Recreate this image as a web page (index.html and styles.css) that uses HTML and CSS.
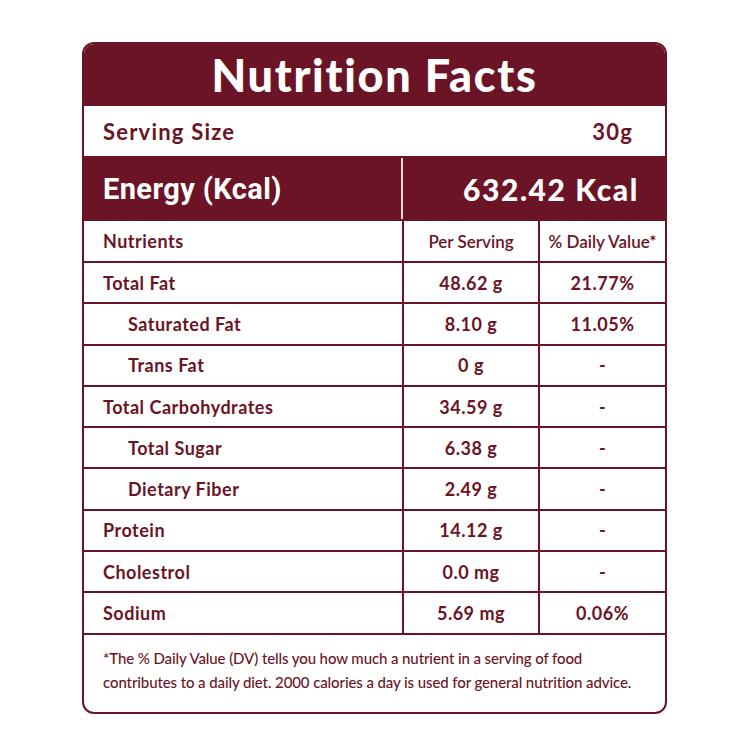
FILE: index.html
```html
<!DOCTYPE html>
<html>
<head>
<meta charset="utf-8">
<link rel="stylesheet" href="styles.css">
</head>
<body>
<div class="card">
  <div class="title">Nutrition Facts</div>
  <div class="serving"><span>Serving Size</span><span>30g</span></div>
  <div class="energy">
    <div class="energy-label">Energy (Kcal)</div>
    <div class="energy-value">632.42 Kcal</div>
  </div>
  <div class="table">
    <div class="row head"><div class="c1">Nutrients</div><div class="c2">Per Serving</div><div class="c3">% Daily Value*</div></div>
    <div class="row"><div class="c1">Total Fat</div><div class="c2">48.62 g</div><div class="c3">21.77%</div></div>
    <div class="row"><div class="c1 sub">Saturated Fat</div><div class="c2">8.10 g</div><div class="c3">11.05%</div></div>
    <div class="row"><div class="c1 sub">Trans Fat</div><div class="c2">0 g</div><div class="c3">-</div></div>
    <div class="row"><div class="c1">Total Carbohydrates</div><div class="c2">34.59 g</div><div class="c3">-</div></div>
    <div class="row"><div class="c1 sub">Total Sugar</div><div class="c2">6.38 g</div><div class="c3">-</div></div>
    <div class="row"><div class="c1 sub">Dietary Fiber</div><div class="c2">2.49 g</div><div class="c3">-</div></div>
    <div class="row"><div class="c1">Protein</div><div class="c2">14.12 g</div><div class="c3">-</div></div>
    <div class="row"><div class="c1">Cholestrol</div><div class="c2">0.0 mg</div><div class="c3">-</div></div>
    <div class="row"><div class="c1">Sodium</div><div class="c2">5.69 mg</div><div class="c3">0.06%</div></div>
  </div>
  <div class="footer">*The % Daily Value (DV) tells you how much a nutrient in a serving of food contributes to a daily diet. 2000 calories a day is used for general nutrition advice.</div>
</div>
</body>
</html>
```
FILE: styles.css
```css
html, body {
  margin: 0;
  padding: 0;
  background: #ffffff;
}
body {
  padding: 42px 0 0 82px;
  font-family: Lato, "Open Sans", sans-serif;
  color: #6b1425;
}
.card {
  width: 585px;
  height: 672px;
  box-sizing: border-box;
  border: 2px solid #6b1425;
  border-radius: 12px;
  overflow: hidden;
  display: flex;
  flex-direction: column;
}
.title {
  height: 62px;
  background: #6b1425;
  color: #ffffff;
  font-weight: 900;
  font-size: 45px;
  line-height: 62px;
  text-align: center;
  letter-spacing: 1.7px;
}
.serving {
  height: 50px;
  display: flex;
  justify-content: space-between;
  align-items: center;
  padding: 0 32px 0 19px;
  font-weight: 700;
  font-size: 22px;
  letter-spacing: 1.2px;
}
.energy {
  height: 65px;
  background: #6b1425;
  color: #ffffff;
  display: flex;
  align-items: stretch;
  padding: 2px 0;
  box-sizing: border-box;
}
.energy-label {
  width: 319px;
  border-right: 2px solid #e9d3d6;
  display: flex;
  align-items: center;
  padding-left: 19px;
  box-sizing: border-box;
  font-family: Roboto, sans-serif;
  font-weight: 700;
  font-size: 29px;
  letter-spacing: 0.4px;
}
.energy-value {
  flex: 1;
  display: flex;
  align-items: center;
  justify-content: flex-end;
  padding-right: 26px;
  font-weight: 900;
  font-size: 30px;
  letter-spacing: 1.6px;
}
.table {
  display: flex;
  flex-direction: column;
}
.row {
  display: grid;
  grid-template-columns: 318px 136px 1fr;
  height: 41.3px;
  border-bottom: 2px solid #6b1425;
  box-sizing: border-box;
  font-weight: 700;
  font-size: 18px;
  letter-spacing: 0.5px;
}
.row.head {
  height: 42px;
}
.row > div {
  display: flex;
  align-items: center;
}
.c1 {
  padding-left: 19px;
}
.c1.sub {
  padding-left: 44px;
}
.c2, .c3 {
  justify-content: center;
  border-left: 2px solid #6b1425;
}
.head .c2, .head .c3 {
  font-weight: 600;
  font-size: 17px;
  letter-spacing: 0;
}
.footer {
  flex: 1;
  padding: 11px 20px 0 19px;
  font-size: 15px;
  line-height: 24px;
  font-weight: 500;
  letter-spacing: -0.1px;
}
```
